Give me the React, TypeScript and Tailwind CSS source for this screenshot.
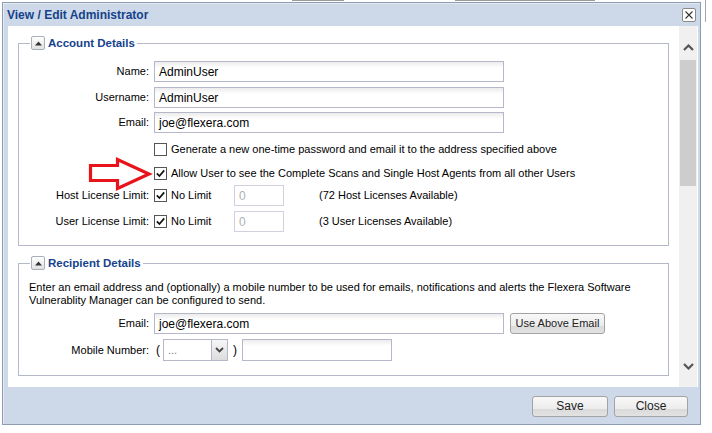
import React from "react";

const font = { fontFamily: "'Liberation Sans', Arial, sans-serif" };

function CheckBox({ checked }: { checked: boolean }) {
  return (
    <span className="inline-flex h-[13px] w-[13px] shrink-0 items-center justify-center border border-[#555] bg-white">
      {checked && (
        <svg width="11" height="11" viewBox="0 0 11 11">
          <path d="M1.8 5.4 L4.4 8 L9.2 2.4" fill="none" stroke="#111" strokeWidth="1.7" />
        </svg>
      )}
    </span>
  );
}

function TextInput({ value, className, disabled }: { value: string; className: string; disabled?: boolean }) {
  return (
    <div
      className={`flex items-center border pl-[4px] ${className} ${
        disabled
          ? "border-[#cfd2dc] bg-white text-[12px] text-[#b0b0b0]"
          : "border-[#b5b8c8] bg-[linear-gradient(#ececec,#fff_6px)] text-[12px] text-black"
      }`}
    >
      {value}
    </div>
  );
}

function Legend({ children }: { children: React.ReactNode }) {
  return (
    <legend className="ml-[11px] px-[1px] pr-[2px]">
      <div className="flex items-center gap-[3px]">
        <span className="flex h-[14px] w-[14px] items-center justify-center rounded-[2px] border border-[#a8afba] bg-[linear-gradient(#fff,#e2e2e2)]">
          <svg width="7" height="5" viewBox="0 0 7 5">
            <path d="M0 4.5 L3.5 0.5 L7 4.5Z" fill="#333" />
          </svg>
        </span>
        <span className="text-[11.5px] font-bold leading-[14px] text-[#15428b]">{children}</span>
      </div>
    </legend>
  );
}

function Btn({ label, className }: { label: string; className: string }) {
  return (
    <div
      className={`flex items-center justify-center rounded-[3px] border border-[#a3a3a3] bg-[linear-gradient(#f8f8f8,#ececec_62%,#dadada_62%,#e2e2e2)] pb-[1px] text-[#222] ${className}`}
    >
      {label}
    </div>
  );
}

function Label({ children }: { children: React.ReactNode }) {
  return <div className="w-[130px] shrink-0 text-right text-[11px] leading-[13px]">{children}</div>;
}

export default function App() {
  return (
    <div className="relative h-[433px] w-[712px] overflow-hidden bg-white text-black" style={font}>
      {/* fragments of the page behind the dialog */}
      <div className="absolute left-[292px] top-0 h-[1px] w-[52px] bg-[#9a9a9a]" />
      <div className="absolute left-[455px] top-0 h-[1px] w-[140px] bg-[#9a9a9a]" />
      <div className="absolute left-[705px] top-0 h-[22px] w-[1px] bg-[#a8a8a8]" />

      <div className="ml-[2px] mt-[2px] flex h-[423px] w-[699px] flex-col border border-[#8f9db3] bg-[#cdd9e8] shadow-[inset_1px_1px_0_#e3eaf3]">
        {/* title bar */}
        <div className="flex h-[23px] shrink-0 items-center justify-between pl-[4px] pr-[4px]">
          <span className="text-[12px] font-bold leading-[14px] text-[#15428b]">View / Edit Administrator</span>
          <span className="flex h-[14px] w-[14px] items-center justify-center rounded-[2px] border border-[#8a8a8a] bg-white">
            <svg width="10" height="10" viewBox="0 0 10 10">
              <path d="M1.5 1.5 L8.5 8.5 M8.5 1.5 L1.5 8.5" stroke="#333" strokeWidth="1.1" />
            </svg>
          </span>
        </div>

        {/* body */}
        <div className="ml-[5px] mr-[2px] flex h-[361px] shrink-0 overflow-hidden bg-white">
          <div className="w-[671px] shrink-0 px-[10px]">
            {/* Account details */}
            <fieldset className="mt-[10px] border border-[#b5b8c8]">
              <Legend>Account Details</Legend>
              <div className="pb-[13px] pt-[11px]">
                <div className="flex h-[21px] items-center">
                  <Label>Name:</Label>
                  <TextInput value="AdminUser" className="ml-[5px] h-[21px] w-[350px]" />
                </div>
                <div className="mt-[5px] flex h-[21px] items-center">
                  <Label>Username:</Label>
                  <TextInput value="AdminUser" className="ml-[5px] h-[21px] w-[350px]" />
                </div>
                <div className="mt-[4px] flex h-[21px] items-center">
                  <Label>Email:</Label>
                  <TextInput value="joe@flexera.com" className="ml-[5px] h-[21px] w-[350px]" />
                </div>
                <div className="mt-[10px] flex h-[13px] items-center">
                  <div className="w-[135px] shrink-0" />
                  <CheckBox checked={false} />
                  <span className="ml-[4px] text-[11px] leading-[13px]">
                    Generate a new one-time password and email it to the address specified above
                  </span>
                </div>
                <div className="mt-[11px] flex h-[13px] items-center">
                  <div className="w-[135px] shrink-0" />
                  <CheckBox checked={true} />
                  <span className="ml-[4px] text-[11px] leading-[13px]">
                    Allow User to see the Complete Scans and Single Host Agents from all other Users
                  </span>
                </div>
                <div className="mt-[5px] flex h-[21px] items-center">
                  <Label>Host License Limit:</Label>
                  <div className="ml-[5px] flex w-[80px] shrink-0 items-center">
                    <CheckBox checked={true} />
                    <span className="ml-[4px] text-[11px] leading-[13px]">No Limit</span>
                  </div>
                  <TextInput value="0" disabled className="h-[21px] w-[50px]" />
                  <span className="ml-[35px] text-[11px] leading-[13px]">(72 Host Licenses Available)</span>
                </div>
                <div className="mt-[5px] flex h-[21px] items-center">
                  <Label>User License Limit:</Label>
                  <div className="ml-[5px] flex w-[80px] shrink-0 items-center">
                    <CheckBox checked={true} />
                    <span className="ml-[4px] text-[11px] leading-[13px]">No Limit</span>
                  </div>
                  <TextInput value="0" disabled className="h-[21px] w-[50px]" />
                  <span className="ml-[35px] text-[11px] leading-[13px]">(3 User Licenses Available)</span>
                </div>
              </div>
            </fieldset>

            {/* Recipient details */}
            <fieldset className="mt-[10px] border border-[#b5b8c8]">
              <Legend>Recipient Details</Legend>
              <div className="pb-[14px] pt-[11px]">
                <p className="pl-[10px] text-[11px] leading-[13px]">
                  Enter an email address and (optionally) a mobile number to be used for emails, notifications and alerts the Flexera Software
                  <br />
                  Vulnerablity Manager can be configured to send.
                </p>
                <div className="mt-[6px] flex h-[21px] items-center">
                  <Label>Email:</Label>
                  <TextInput value="joe@flexera.com" className="ml-[5px] h-[21px] w-[350px]" />
                  <Btn label="Use Above Email" className="ml-[6px] h-[21px] w-[95px] text-[11px]" />
                </div>
                <div className="mt-[5px] flex h-[22px] items-center">
                  <Label>Mobile Number:</Label>
                  <span className="ml-[7px] text-[12px]">(</span>
                  <div className="ml-[3px] flex h-[22px] w-[65px] border border-[#b5b8c8]">
                    <div className="flex flex-1 items-center bg-white pl-[4px] text-[11px] text-[#777]">...</div>
                    <div className="flex w-[16px] items-center justify-center border-l border-[#b5b8c8] bg-[linear-gradient(#f6f6f6,#dcdcdc)]">
                      <svg width="9" height="6" viewBox="0 0 9 6">
                        <path d="M1 1 L4.5 4.5 L8 1" fill="none" stroke="#444" strokeWidth="1.8" />
                      </svg>
                    </div>
                  </div>
                  <span className="ml-[5px] text-[12px]">)</span>
                  <TextInput value="" className="ml-[5px] h-[22px] w-[150px]" />
                </div>
              </div>
            </fieldset>
          </div>

          {/* scrollbar */}
          <div className="flex w-[18px] shrink-0 flex-col items-center bg-[#f0f0f0]">
            <svg className="mt-[18px]" width="11" height="7" viewBox="0 0 11 7">
              <path d="M1 6 L5.5 1.5 L10 6" fill="none" stroke="#555" strokeWidth="2.2" />
            </svg>
            <div className="mt-[9px] h-[126px] w-[16px] bg-[#cdcdcd]" />
            <div className="flex-1" />
            <svg className="mb-[17px]" width="11" height="7" viewBox="0 0 11 7">
              <path d="M1 1 L5.5 5.5 L10 1" fill="none" stroke="#555" strokeWidth="2.2" />
            </svg>
          </div>
        </div>

        {/* footer */}
        <div className="flex flex-1 items-start justify-end gap-[6px] pr-[12px] pt-[9px]">
          <Btn label="Save" className="h-[21px] w-[76px] text-[12px]" />
          <Btn label="Close" className="h-[21px] w-[74px] text-[12px]" />
        </div>
      </div>

      {/* red annotation arrow */}
      <svg className="absolute left-[88px] top-[157px]" width="66" height="34" viewBox="0 0 66 34">
        <path
          d="M2.5 8.5 L29.5 8.5 L29.5 2.5 L61 17 L29.5 31.5 L29.5 23.5 L2.5 23.5 Z"
          fill="white"
          stroke="#e8141b"
          strokeWidth="3.2"
          strokeLinejoin="miter"
        />
      </svg>
    </div>
  );
}
